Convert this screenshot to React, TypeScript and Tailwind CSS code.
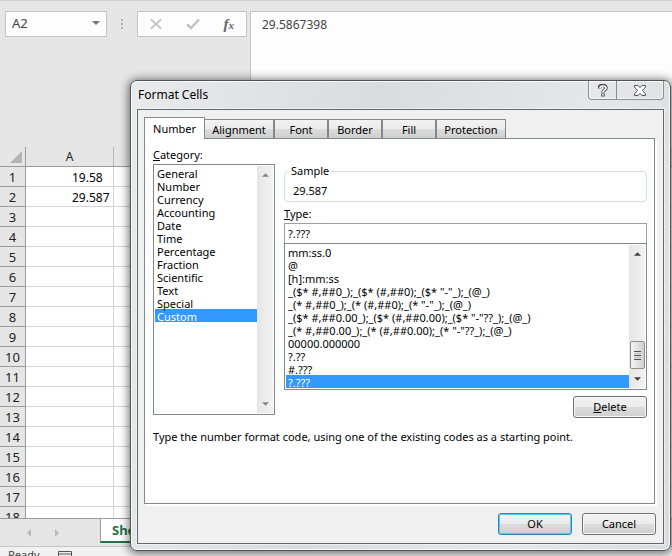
import { useState } from "react";
import type { ReactNode } from "react";

const columns = ["A", "B", "C", "D", "E", "F"];
const rows = Array.from({ length: 18 }, (_, i) => i + 1);
const values: Record<number, string> = { 1: "19.58", 2: "29.587" };

const tabs = [
  { name: "Alignment", width: "w-[70px]" },
  { name: "Font", width: "w-[54px]" },
  { name: "Border", width: "w-[54px]" },
  { name: "Fill", width: "w-[54px]" },
  { name: "Protection", width: "w-[70px]" },
];

const categories = [
  "General", "Number", "Currency", "Accounting", "Date", "Time",
  "Percentage", "Fraction", "Scientific", "Text", "Special", "Custom",
];

const formats = [
  "mm:ss.0",
  "@",
  "[h]:mm:ss",
  '_($* #,##0_);_($* (#,##0);_($* "-"_);_(@_)',
  '_(* #,##0_);_(* (#,##0);_(* "-"_);_(@_)',
  '_($* #,##0.00_);_($* (#,##0.00);_($* "-"??_);_(@_)',
  '_(* #,##0.00_);_(* (#,##0.00);_(* "-"??_);_(@_)',
  "00000.000000",
  "?.??",
  "#.???",
  "?.???",
];

function Arrow({ up = false, color = "#404040" }: { up?: boolean; color?: string }) {
  return (
    <svg width="7" height="4" viewBox="0 0 8 4" aria-hidden="true">
      <path d={up ? "M0 4L4 0L8 4Z" : "M0 0H8L4 4Z"} fill={color} />
    </svg>
  );
}

function ScrollBar({ thumb = false }: { thumb?: boolean }) {
  const color = thumb ? "#404040" : "#858585";
  return (
    <div className="flex w-4 flex-col items-center bg-gradient-to-r from-[#e6e6e6] to-[#f2f2f2] py-[7px]">
      <Arrow up color={color} />
      <div className="flex-1" />
      {thumb && (
        <div className="mb-2 flex h-7 w-[15px] flex-col items-center justify-center gap-px rounded-xs border border-[#8f8f8f] bg-gradient-to-r from-[#f5f5f5] to-[#cfcfcf]">
          <div className="h-px w-[7px] bg-[#555]" />
          <div className="h-px w-[7px] bg-[#bbb]" />
          <div className="h-px w-[7px] bg-[#555]" />
          <div className="h-px w-[7px] bg-[#bbb]" />
          <div className="h-px w-[7px] bg-[#555]" />
        </div>
      )}
      <Arrow color={color} />
    </div>
  );
}

function ListBox({ id, items, value, onChange, scroll, className }: {
  id: string;
  items: string[];
  value: string;
  onChange: (v: string) => void;
  scroll: boolean;
  className: string;
}) {
  return (
    <div className={`flex border border-[#828790] bg-white p-px ${className}`}>
      <select
        id={id}
        aria-label={id}
        size={items.length}
        value={value}
        onChange={(e) => onChange(e.target.value)}
        className="min-w-0 flex-1 appearance-none overflow-hidden bg-white text-[11px] outline-none"
      >
        {items.map((item) => (
          <option
            key={item}
            className="h-[13px] min-h-0 p-0 px-0.5 leading-[11px] checked:bg-linear-to-r checked:from-[#3399ff] checked:to-[#3399ff] checked:[-webkit-text-fill-color:white]"
          >
            {item}
          </option>
        ))}
      </select>
      <ScrollBar thumb={scroll} />
    </div>
  );
}

function PushButton({ children, primary = false }: { children: ReactNode; primary?: boolean }) {
  return (
    <button
      type="button"
      className={`h-[22px] w-[74px] rounded-[3px] border bg-[linear-gradient(#f3f3f3,#ebebeb_50%,#dddddd_50%,#cfcfcf)] text-[11px] leading-4 ${
        primary ? "border-[#3c7fb1] inset-ring inset-ring-[#48d0f8]" : "border-[#707070] inset-ring inset-ring-[#f8f8f8]"
      }`}
    >
      {children}
    </button>
  );
}

function FormulaBar() {
  return (
    <header className="flex h-[147px] shrink-0 items-start border-t border-[#cfcfcf] pt-2.5 pl-[5px]">
      <div className="flex h-[26px] w-[102px] items-center border border-[#c3c3c3] bg-[#fdfdfd] pr-1.5 pl-1.5">
        <input aria-label="Name box" defaultValue="A2" className="w-0 flex-1 bg-transparent text-[13px] outline-none" />
        <button type="button" aria-label="Open name list">
          <svg width="8" height="4" viewBox="0 0 8 4" className="mb-0.5"><path d="M0 0H8L4 4Z" fill="#777" /></svg>
        </button>
      </div>
      <div className="ml-3.5 flex h-[26px] w-[2px] flex-col justify-center gap-0.5">
        <div className="size-0.5 bg-[#b0b0b0]" />
        <div className="size-0.5 bg-[#b0b0b0]" />
        <div className="size-0.5 bg-[#b0b0b0]" />
      </div>
      <div className="ml-3.5 flex h-[26px] w-[110px] items-center justify-between border border-[#c3c3c3] bg-[#fdfdfd] px-3">
        <button type="button" aria-label="Cancel entry">
          <svg width="12" height="12" viewBox="0 0 12 12" fill="none" stroke="#c3c3c3" strokeWidth="1.8"><path d="M1 1.5L11 10.5M11 1.5L1 10.5" /></svg>
        </button>
        <button type="button" aria-label="Enter">
          <svg width="14" height="12" viewBox="0 0 14 12" fill="none" stroke="#c3c3c3" strokeWidth="2.4"><path d="M1 6.5L5 10L13 1.5" /></svg>
        </button>
        <button type="button" aria-label="Insert function" className="font-['Liberation_Serif',serif] text-[15px] leading-4 font-bold text-[#666] italic">
          f<span className="text-[11px]">x</span>
        </button>
      </div>
      <textarea
        aria-label="Formula"
        defaultValue="29.5867398"
        className="ml-[3px] h-full flex-1 resize-none border-t border-l border-[#c3c3c3] bg-[#fdfdfd] px-[11px] py-[5px] text-xs leading-4 outline-none"
      />
    </header>
  );
}

function Sheet() {
  return (
    <main className="min-h-0 flex-1 overflow-hidden bg-white">
      <table className="w-full table-fixed border-separate border-spacing-0 text-[12px] leading-4 text-[#222]">
        <thead>
          <tr className="h-5 bg-[#e6e6e6]">
            <th className="w-[26px] border-r border-b border-[#9b9b9b] p-0" aria-label="Select all">
              <svg width="12" height="12" viewBox="0 0 12 12" className="ml-2.5"><path d="M12 0V12H0Z" fill="#b4b4b4" /></svg>
            </th>
            {columns.map((c) => (
              <th key={c} className="w-[88px] border-r border-b border-[#9b9b9b] border-r-[#b5b5b5] p-0 font-normal">{c}</th>
            ))}
            <th className="border-b border-[#9b9b9b] p-0 font-normal">G</th>
          </tr>
        </thead>
        <tbody>
          {rows.map((r) => (
            <tr key={r} className="h-5">
              <th className="border-r border-b border-[#9b9b9b] bg-[#e6e6e6] p-0 text-[13px] font-normal">{r}</th>
              {columns.map((c) => (
                <td key={c} className="border-r border-b border-[#d4d4d4] p-0 pt-0.5 pl-[46px] text-black">{c === "A" ? values[r] : ""}</td>
              ))}
              <td className="border-b border-[#d4d4d4] p-0" />
            </tr>
          ))}
        </tbody>
      </table>
    </main>
  );
}

function FormatCells() {
  const [category, setCategory] = useState("Custom");
  const [format, setFormat] = useState("?.???");
  return (
    <section
      role="dialog"
      aria-label="Format Cells"
      className="absolute top-20 right-px left-[130px] rounded-[7px] border border-[#505358] bg-[linear-gradient(100deg,#e9eaeb,#d9dbdd_40%,#e6e7e9_75%,#d9dbde)] px-1.5 pb-1.5 text-[11px] leading-4 text-black shadow-[0_1px_8px_2px_rgba(0,0,0,0.5)] inset-ring inset-ring-white/80"
    >
      <div className="flex h-7 items-start justify-between">
        <h1 className="pt-1.5 pl-px text-xs leading-4">Format Cells</h1>
        <div className="flex h-[19px] rounded-b-[4px] border border-t-0 border-[#8b8d90] inset-ring inset-ring-white/60">
          <button type="button" aria-label="Help" className="flex w-7 items-center justify-center border-r border-[#8b8d90]">
            <svg width="10" height="13" viewBox="0 0 10 13" fill="none">
              <path d="M1.2 4.6C1.2 .2 8 .4 8 4C8 6.2 5 6 5 8.6M5 9.2V12.4" stroke="#505060" strokeWidth="3.6" />
              <path d="M2 4.2C2 1.3 8 1.3 8 4C8 6.2 5 6 5 8.2M5 9.8V11.6" stroke="white" strokeWidth="1.6" />
            </svg>
          </button>
          <button type="button" aria-label="Close" className="flex w-[46px] items-center justify-center">
            <svg width="12" height="11" viewBox="0 0 12 11">
              <path d="M.5.5H4L6 2.7L8 .5H11.5V2L8.5 5.5L11.5 9V10.5H8L6 8.3L4 10.5H.5V9L3.5 5.5L.5 2Z" fill="white" stroke="#505060" />
            </svg>
          </button>
        </div>
      </div>
      <div className="border border-[#65676b] bg-[#f0f0f0] pt-[7px] pr-[7px] pb-2 pl-1.5 ring ring-white/50">
        <div role="tablist" className="flex h-[21px] items-end">
          <button role="tab" aria-selected="true" type="button" className="relative z-10 -mb-px h-[22px] w-[61px] border border-b-0 border-[#828790] bg-white">
            Number
          </button>
          <div className="-ml-px flex">
            {tabs.map((t) => (
              <button
                key={t.name}
                role="tab"
                aria-selected="false"
                type="button"
                className={`h-[19px] border border-b-0 border-[#828790] bg-[linear-gradient(#f3f3f3,#ebebeb_50%,#dddddd_50%,#cfcfcf)] pt-px ${t.width}`}
              >
                {t.name}
              </button>
            ))}
          </div>
        </div>
        <div className="mr-px border border-[#828790] bg-white pt-2 pr-[7px] pb-[58px] pl-2 shadow-[2px_2px_0_white]">
          <div className="flex gap-[9px]">
            <div className="w-[122px] shrink-0">
              <label htmlFor="Category" className="block h-[17px]"><u>C</u>ategory:</label>
              <ListBox id="Category" items={categories} value={category} onChange={setCategory} scroll={false} className="h-[251px]" />
            </div>
            <div className="flex min-w-0 flex-1 flex-col pt-4">
              <fieldset className="h-[39px] rounded-[4px] border border-[#d5dfe8] pl-2">
                <legend className="-ml-1 px-0.5">Sample</legend>
                <output className="block pt-1">29.587</output>
              </fieldset>
              <label htmlFor="code" className="mt-1 block h-[17px]"><u>T</u>ype:</label>
              <input
                id="code"
                value={format}
                onChange={(e) => setFormat(e.target.value)}
                className="h-5 border border-b-0 border-[#a0a0a0] px-[3px] outline-none"
              />
              <ListBox id="Type" items={formats} value={format} onChange={setFormat} scroll className="h-[147px]" />
              <div className="mt-1.5 flex justify-end"><PushButton><u>D</u>elete</PushButton></div>
            </div>
          </div>
          <p className="mt-[11px]">Type the number format code, using one of the existing codes as a starting point.</p>
        </div>
        <div className="mt-[9px] flex justify-end gap-2.5">
          <PushButton primary>OK</PushButton>
          <PushButton>Cancel</PushButton>
        </div>
      </div>
    </section>
  );
}

export default function App() {
  return (
    <div className="relative flex h-screen flex-col overflow-hidden bg-[#e6e6e6] font-['Noto_Sans',sans-serif] text-[#444]">
      <FormulaBar />
      <Sheet />
      <nav className="flex h-[29px] shrink-0 border-t border-b border-[#9b9b9b] border-b-[#c6c6c6]">
        <div className="flex w-[100px] items-center gap-6 pl-[27px]">
          <button type="button" aria-label="Previous sheet">
            <svg width="4" height="8" viewBox="0 0 4 8"><path d="M4 0V8L0 4Z" fill="#b8b8b8" /></svg>
          </button>
          <button type="button" aria-label="Next sheet">
            <svg width="4" height="8" viewBox="0 0 4 8"><path d="M0 0V8L4 4Z" fill="#b8b8b8" /></svg>
          </button>
        </div>
        <button type="button" className="mb-[3px] border-b-2 border-l border-b-[#217346] border-l-[#9b9b9b] bg-white px-[11px] pt-0.5 text-[13px] font-bold text-[#217346]">
          Sheet1
        </button>
      </nav>
      <footer className="flex h-[9px] shrink-0 overflow-hidden bg-[#f1f1f1] pl-2 text-[11px] leading-4">
        <span>Ready</span>
        <svg width="14" height="12" viewBox="0 0 14 12" className="mt-1 ml-[18px] shrink-0" fill="none" stroke="#555">
          <path d="M.5.5H13.5V11.5H.5ZM.5 3H13.5M3 5.5H6M8 5.5H11M3 8.5H11" />
        </svg>
      </footer>
      <FormatCells />
    </div>
  );
}
